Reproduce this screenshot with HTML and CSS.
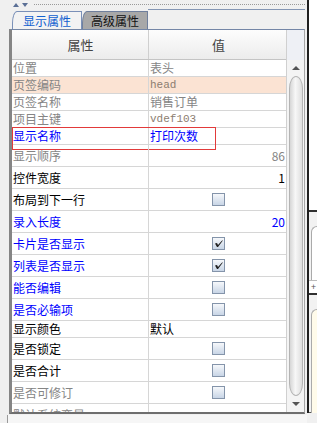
FILE: index.html
```html
<!DOCTYPE html>
<html lang="zh-CN">
<head>
    <meta charset="UTF-8">
    <title>显示属性</title>
    <link rel="stylesheet" href="styles.css">
</head>
<body>
    <div class="main">
        <div class="left">
            <div class="topbar">
                <span class="tri up"></span>
                <span class="tri down"></span>
                <span class="dots"></span>
            </div>
            <div class="tabs">
                <div class="tab active">显示属性</div>
                <div class="tab">高级属性</div>
                <div class="tab-fill"></div>
            </div>

            <div class="panel">
                <div class="grid">
                    <div class="row head"><div class="k">属性</div><div class="v">值</div></div>
                    <div class="row gray"><div class="k">位置</div><div class="v">表头</div></div>
                    <div class="row gray peach"><div class="k">页签编码</div><div class="v mono">head</div></div>
                    <div class="row gray"><div class="k">页签名称</div><div class="v">销售订单</div></div>
                    <div class="row gray"><div class="k">项目主键</div><div class="v mono">vdef103</div></div>
                    <div class="row blue sel"><div class="k">显示名称</div><div class="v">打印次数</div><span class="sel-box"></span></div>
                    <div class="row gray tall"><div class="k">显示顺序</div><div class="v num">86</div></div>
                    <div class="row tall"><div class="k">控件宽度</div><div class="v num">1</div></div>
                    <div class="row tall"><div class="k">布局到下一行</div><div class="v chk"><span class="box"></span></div></div>
                    <div class="row blue tall"><div class="k">录入长度</div><div class="v num">20</div></div>
                    <div class="row blue tall"><div class="k">卡片是否显示</div><div class="v chk"><span class="box on"><svg viewBox="0 0 11 11"><path d="M2 5.5 L4 5 L5 7 L9.5 2 L9.5 3 L5 9 L4 9 Z"/></svg></span></div></div>
                    <div class="row blue tall"><div class="k">列表是否显示</div><div class="v chk"><span class="box on"><svg viewBox="0 0 11 11"><path d="M2 5.5 L4 5 L5 7 L9.5 2 L9.5 3 L5 9 L4 9 Z"/></svg></span></div></div>
                    <div class="row blue tall"><div class="k">能否编辑</div><div class="v chk"><span class="box"></span></div></div>
                    <div class="row blue tall"><div class="k">是否必输项</div><div class="v chk"><span class="box"></span></div></div>
                    <div class="row"><div class="k">显示颜色</div><div class="v">默认</div></div>
                    <div class="row tall"><div class="k">是否锁定</div><div class="v chk"><span class="box"></span></div></div>
                    <div class="row tall"><div class="k">是否合计</div><div class="v chk"><span class="box"></span></div></div>
                    <div class="row gray tall"><div class="k">是否可修订</div><div class="v chk"><span class="box"></span></div></div>
                    <div class="row gray tall"><div class="k">默认系统变量</div><div class="v"></div></div>
                </div>

                <div class="scrollbar">
                    <div class="sb-head"></div>
                    <div class="sb-track">
                        <div class="sb-btn"><span class="arrow up"></span></div>
                        <div class="sb-thumb"></div>
                        <div class="sb-btn"><span class="arrow down"></span></div>
                    </div>
                </div>
            </div>

            <div class="footer">参照设置</div>
        </div>

        <div class="side">
            <div class="side-top"></div>
            <div class="side-mid"><div class="round"></div></div>
            <div class="side-plus">+</div>
            <div class="side-low"><div class="round yellow"></div></div>
        </div>
    </div>
</body>
</html>
```

FILE: styles.css
```css
body {
    margin: 0;
    width: 317px;
    height: 423px;
    overflow: hidden;
    background: #f0f0f0;
    font-family: "Noto Sans CJK SC", "Liberation Sans", sans-serif;
    font-size: 12px;
    color: #000;
}

.main {
    display: flex;
    height: 423px;
}

.left {
    width: 307px;
    display: flex;
    flex-direction: column;
}

/* top strip with arrows and dotted grip */
.topbar {
    height: 9px;
    display: flex;
    align-items: center;
    padding-left: 13px;
    gap: 3px;
}

.tri {
    width: 0;
    height: 0;
    border-left: 3px solid transparent;
    border-right: 3px solid transparent;
}

.tri.up {
    border-bottom: 4px solid #5a6f95;
}

.tri.down {
    border-top: 4px solid #5a6f95;
}

.dots {
    flex: 1;
    margin: 0 2px 0 3px;
    border-top: 1px dotted #9a9a9a;
}

/* tabs */
.tabs {
    height: 20px;
    display: flex;
    align-items: flex-end;
    padding-left: 12px;
}

.tab {
    height: 18px;
    box-sizing: border-box;
    padding: 0 8px;
    line-height: 17px;
    font-size: 12px;
    border: 1px solid #6f7f9c;
    border-bottom: none;
    border-top-left-radius: 5px 12px;
    background: #a8a8a8;
    color: #111;
    white-space: nowrap;
}

.tab.active {
    padding: 0 10px;
    background: #f3f3f3;
    color: #1060d0;
    border-color: #7a90b8;
}

.tab-fill {
    flex: 1;
    align-self: flex-start;
    border-top: 1px solid #8496b4;
    margin-right: 2px;
}

/* property panel */
.panel {
    margin-left: 9px;
    width: 296px;
    height: 385px;
    box-sizing: border-box;
    display: flex;
    border-left: 3px solid #858585;
    border-top: 1px solid #7486a6;
    border-right: 1px solid #a6a6a6;
    border-bottom: 2px solid #6e6e6e;
    background: #fff;
    overflow: hidden;
}

.grid {
    width: 275px;
    overflow: hidden;
}

.row {
    position: relative;
    display: grid;
    grid-template-columns: 136px 139px;
    height: 17px;
    box-sizing: border-box;
    border-bottom: 1px solid #d6d6d6;
    line-height: 16px;
    white-space: nowrap;
}

.row.tall {
    height: 22px;
    line-height: 21px;
}

.row .k {
    padding-left: 1px;
}

.row .v {
    border-left: 1px solid #d6d6d6;
    padding-left: 1px;
}

.row.head {
    height: 30px;
    line-height: 29px;
    background: linear-gradient(#fdfdfd, #ececec);
    border-bottom-color: #c4c4c4;
    color: #444;
    font-size: 13px;
}

.row.head .k,
.row.head .v {
    text-align: center;
}

.row.head .v {
    border-left-color: #cfcfcf;
}

.gray {
    color: #858585;
}

.blue {
    color: #0000ff;
}

.peach {
    background: #fbe3d3;
}

.mono {
    font-family: "Liberation Mono", monospace;
    font-size: 11px;
    color: #8c7d70;
}

.num {
    text-align: right;
    padding-right: 2px;
}

.chk {
    display: flex;
    align-items: center;
    justify-content: center;
}

.box {
    width: 13px;
    height: 13px;
    box-sizing: border-box;
    border: 1px solid #8494aa;
    background: linear-gradient(#f6f8fb, #c8d5e6);
    display: flex;
}

.box svg {
    width: 11px;
    height: 11px;
    fill: #1e1e1e;
}

.sel-box {
    position: absolute;
    left: 0;
    top: -1px;
    width: 204px;
    height: 23px;
    box-sizing: border-box;
    border: 1px solid #e23a3a;
}

/* scrollbar */
.scrollbar {
    width: 17px;
    display: flex;
    flex-direction: column;
    border-left: 1px solid #d0d0d0;
}

.sb-head {
    height: 30px;
    background: #eef0f5;
}

.sb-track {
    flex: 1;
    display: flex;
    flex-direction: column;
    padding: 2px 1px 2px 2px;
    background: #f4f4f4;
}

.sb-btn {
    height: 12px;
    display: flex;
    align-items: center;
    justify-content: center;
}

.arrow {
    width: 0;
    height: 0;
    border-left: 4px solid transparent;
    border-right: 4px solid transparent;
}

.arrow.up {
    border-bottom: 4px solid #555;
}

.arrow.down {
    border-top: 4px solid #555;
}

.sb-thumb {
    flex: 1;
    margin: 2px 0;
    border: 1px solid #b4b4b4;
    border-radius: 9px / 16px;
    background: linear-gradient(to right, #d6d6d6, #f7f7f7 45%, #dedede);
}

/* bottom strip */
.footer {
    margin-left: 7px;
    margin-top: 1px;
    flex: 1;
    padding-left: 15px;
    line-height: 28px;
    border-left: 1px solid #9a9a9a;
    background: #f6f6f6;
    overflow: hidden;
}

/* neighbouring window edge */
.side {
    width: 8px;
    height: 413px;
    border-left: 2px solid #1f1f1f;
    display: flex;
    flex-direction: column;
    background: #fff;
}

.side-top {
    height: 210px;
    border-bottom: 2px solid #303030;
}

.side-mid {
    height: 68px;
    padding: 14px 0 0 2px;
    box-sizing: border-box;
    background: #f2f2f2;
}

.side-plus {
    height: 12px;
    font-size: 9px;
    line-height: 11px;
    color: #555;
    padding-left: 2px;
    border-top: 1px solid #bbb;
    border-bottom: 2px solid #303030;
}

.side-low {
    flex: 1;
    padding: 14px 0 0 2px;
    background: #f2f2f2;
    border-bottom: 1px solid #555;
}

.round {
    height: 100%;
    border-top: 1px solid #aaa;
    border-left: 1px solid #aaa;
    border-top-left-radius: 8px;
    background: #fff;
}

.round.yellow {
    background: #fffbea;
}
```
